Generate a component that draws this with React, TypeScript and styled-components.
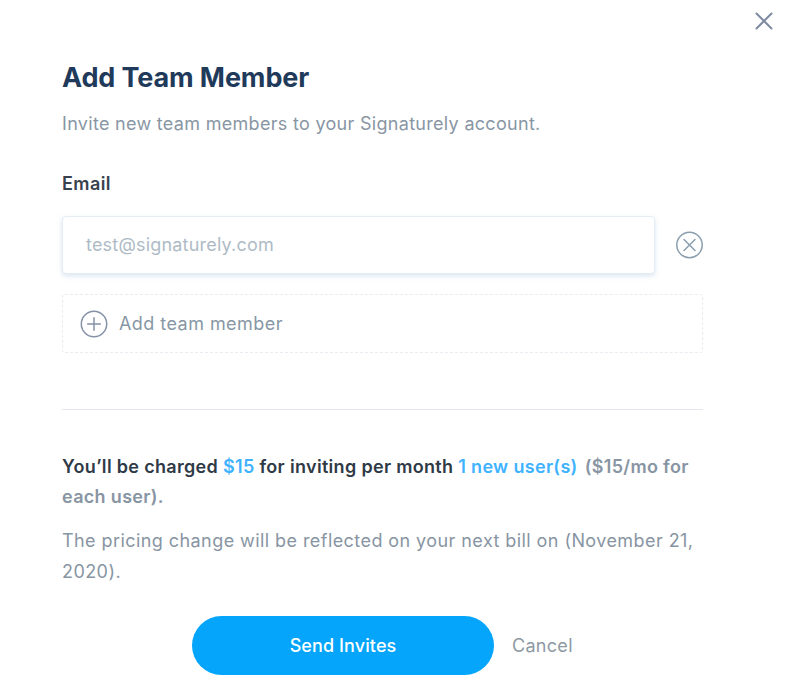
import React from "react";
import styled, { createGlobalStyle } from "styled-components";

const Global = createGlobalStyle`
  html, body { margin: 0; padding: 0; background: #fff; }
  body { font-family: "Inter", "Noto Sans", sans-serif; }
`;

const Modal = styled.div`
  position: relative;
  width: 787px;
  height: 681px;
  overflow: hidden;
  box-sizing: border-box;
  padding: 60px 84px 0 62px;
  display: flex;
  flex-direction: column;
  background: #fff;
`;

const CloseButton = styled.button`
  position: absolute;
  top: 11px;
  left: 755px;
  width: 18px;
  height: 20px;
  padding: 0;
  border: 0;
  background: none;
  color: #7e8ba0;
  display: flex;
  align-items: center;
  justify-content: center;
`;

const Title = styled.h1`
  margin: 0;
  font-size: 27px;
  line-height: 35px;
  font-weight: 700;
  letter-spacing: -0.12px;
  color: #1f3a5a;
`;

const Subtitle = styled.p`
  margin: 17px 0 0;
  font-size: 18px;
  line-height: 24px;
  font-weight: 400;
  color: #8996a4;
  letter-spacing: 0.3px;
`;

const Label = styled.label`
  display: block;
  margin-top: 36px;
  font-size: 18px;
  line-height: 24px;
  font-weight: 600;
  color: #38424f;
  letter-spacing: 0.4px;
`;

const InputRow = styled.div`
  margin-top: 20px;
  display: flex;
  align-items: center;
  justify-content: space-between;
`;

const Input = styled.input`
  box-sizing: border-box;
  width: 593px;
  height: 58px;
  padding: 0 23px 2px;
  border: 1px solid #e3edf6;
  border-radius: 4px;
  box-shadow: 0 2px 5px rgba(150, 180, 215, 0.35);
  font-family: inherit;
  font-size: 18px;
  letter-spacing: 0.2px;
  color: #a9b8c4;
  background: #fff;
  outline: none;
  &::placeholder { color: #aebbc6; opacity: 1; }
`;

const IconButton = styled.button`
  width: 28px;
  height: 28px;
  padding: 0;
  border: 0;
  background: none;
  color: #8a9eae;
  display: flex;
  flex: none;
`;

const AddRow = styled.button`
  box-sizing: border-box;
  margin-top: 20px;
  width: 100%;
  height: 59px;
  padding: 0 17px;
  display: flex;
  align-items: center;
  gap: 11px;
  border: 1px dashed #e8ecf0;
  border-radius: 3px;
  background: #fff;
  font-family: inherit;
  font-size: 18px;
  letter-spacing: 0.45px;
  color: #8797a5;
`;

const Divider = styled.hr`
  margin: 56px 0 0;
  border: 0;
  height: 1px;
  background: #e3e6ea;
`;

const Charge = styled.p`
  margin: 42px 0 0;
  font-size: 18px;
  line-height: 30px;
  font-weight: 600;
  color: #8895a3;
  letter-spacing: 0.32px;
`;

const Dark = styled.span`
  color: #2f3a47;
`;

const Accent = styled.span`
  color: #3fb3ff;
`;

const GapText = styled.span`
  margin-left: 7px;
`;

const Note = styled.p`
  margin: 13px 0 0;
  font-size: 18px;
  line-height: 31px;
  color: #8895a3;
  letter-spacing: 0.43px;
`;

const Actions = styled.div`
  margin-top: 29px;
  display: flex;
  align-items: center;
  gap: 18px;
  padding-left: 130px;
`;

const Primary = styled.button`
  width: 302px;
  height: 59px;
  border: 0;
  border-radius: 30px;
  background: #04a5fb;
  color: #fff;
  font-family: inherit;
  font-size: 18px;
  font-weight: 500;
  letter-spacing: 0.1px;
`;

const Cancel = styled.button`
  padding: 0;
  border: 0;
  background: none;
  font-family: inherit;
  font-size: 18px;
  letter-spacing: 0.3px;
  color: #8e99a4;
`;

export default function App() {
  return (
    <>
      <Global />
      <Modal>
        <CloseButton aria-label="Close">
          <svg width="18" height="18" viewBox="0 0 18 18" fill="none" stroke="currentColor" strokeWidth="2" strokeLinecap="round">
            <path d="M1.5 1.5 16.5 16.5M16.5 1.5 1.5 16.5" />
          </svg>
        </CloseButton>
        <Title>Add Team Member</Title>
        <Subtitle>Invite new team members to your Signaturely account.</Subtitle>
        <Label>Email</Label>
        <InputRow>
          <Input placeholder="test@signaturely.com" />
          <IconButton aria-label="Remove">
            <svg width="28" height="28" viewBox="0 0 28 28" fill="none" stroke="currentColor" strokeWidth="1.5" strokeLinecap="round">
              <circle cx="14.5" cy="14" r="12.7" />
              <path d="M9 8.5 20 19.500M20 8.500 9 19.500" />
            </svg>
          </IconButton>
        </InputRow>
        <AddRow>
          <svg width="28" height="28" viewBox="0 0 28 28" fill="none" stroke="#8491a6" strokeWidth="1.5" strokeLinecap="round">
            <circle cx="14" cy="14" r="12.7" />
            <path d="M14 7.700V20.300M7.700 14H20.300" />
          </svg>
          Add team member
        </AddRow>
        <Divider />
        <Charge>
          <Dark>You’ll be charged </Dark>
          <Accent>$15</Accent>
          <Dark> for inviting per month </Dark>
          <Accent>1 new user(s)</Accent>
          <GapText>($15/mo for each user).</GapText>
        </Charge>
        <Note>The pricing change will be reflected on your next bill on (November 21, 2020).</Note>
        <Actions>
          <Primary>Send Invites</Primary>
          <Cancel>Cancel</Cancel>
        </Actions>
      </Modal>
    </>
  );
}
